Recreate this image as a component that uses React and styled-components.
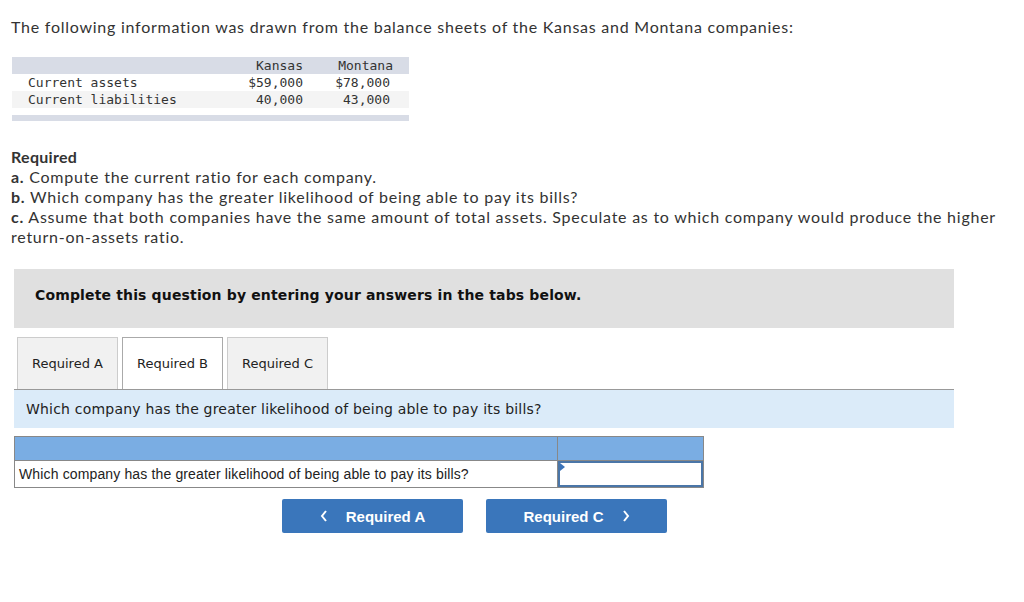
import styled, { createGlobalStyle } from "styled-components";

const GlobalStyle = createGlobalStyle`
  body {
    margin: 0;
    background: #fff;
    color: #333;
  }
`;

function DataTable() {
  const rows = [
    ["Current assets", "$59,000", "$78,000"],
    ["Current liabilities", "40,000", "43,000"],
  ];
  return (
    <DataWrap>
      <DataHead>
        <span></span>
        <span>Kansas</span>
        <span>Montana</span>
      </DataHead>
      {rows.map((r, i) => (
        <DataRow key={i} $shade={i % 2 === 1}>
          <span>{r[0]}</span>
          <span>{r[1]}</span>
          <span>{r[2]}</span>
        </DataRow>
      ))}
      <DataFoot />
    </DataWrap>
  );
}

function Chevron({ dir }) {
  return (
    <svg width="8" height="12" viewBox="0 0 8 12">
      <path
        d={dir === "left" ? "M6 1 L2 6 L6 11" : "M2 1 L6 6 L2 11"}
        fill="none"
        stroke="#fff"
        strokeWidth="2"
      />
    </svg>
  );
}

export default function App() {
  return (
    <Page>
      <GlobalStyle />
      <Intro>
        The following information was drawn from the balance sheets of the Kansas and Montana companies:
      </Intro>
      <DataTable />
      <Required>
        <strong>Required</strong>
        <Line><b>a.</b> Compute the current ratio for each company.</Line>
        <Line><b>b.</b> Which company has the greater likelihood of being able to pay its bills?</Line>
        <Line>
          <b>c.</b> Assume that both companies have the same amount of total assets. Speculate as to which company would produce the higher return-on-assets ratio.
        </Line>
      </Required>
      <Notice>Complete this question by entering your answers in the tabs below.</Notice>
      <Tabs>
        <Tab>Required A</Tab>
        <Tab $active>Required B</Tab>
        <Tab>Required C</Tab>
      </Tabs>
      <Prompt>Which company has the greater likelihood of being able to pay its bills?</Prompt>
      <AnswerTable>
        <AnsHead />
        <AnsHead />
        <AnsLabel>Which company has the greater likelihood of being able to pay its bills?</AnsLabel>
        <AnsInput />
      </AnswerTable>
      <NavRow>
        <NavButton>
          <Chevron dir="left" />
          Required A
        </NavButton>
        <NavButton>
          Required C
          <Chevron dir="right" />
        </NavButton>
      </NavRow>
    </Page>
  );
}

const Page = styled.div`
  padding: 17px 0 0 11px;
  width: 1000px;
`;

const Intro = styled.p`
  margin: 0;
  font-family: Lato, "Open Sans", sans-serif;
  font-size: 16px;
  line-height: 20px;
  letter-spacing: 0.75px;
  color: #333;
`;

const DataWrap = styled.div`
  margin: 20px 0 0 1px;
  width: 397px;
  font-family: "DejaVu Sans Mono", monospace;
  font-size: 13px;
  color: #333;
`;

const DataHead = styled.div`
  display: grid;
  grid-template-columns: 1fr 87px 90px;
  align-items: center;
  height: 17px;
  padding: 0 16px;
  background: #d8dce6;
  span {
    text-align: right;
  }
`;

const DataRow = styled.div`
  display: grid;
  grid-template-columns: 1fr 86px 87px;
  align-items: center;
  height: 17px;
  padding: 0 19px 0 16px;
  background: ${(p) => (p.$shade ? "#f4f4f4" : "#fff")};
  span:nth-child(n + 2) {
    text-align: right;
  }
`;

const DataFoot = styled.div`
  height: 6px;
  margin-top: 7px;
  background: #d8dce6;
`;

const Required = styled.div`
  margin-top: 26px;
  font-family: Lato, "Open Sans", sans-serif;
  font-size: 16px;
  line-height: 20px;
  letter-spacing: 0.75px;
  color: #333;
  strong {
    display: block;
    font-weight: 700;
    letter-spacing: 0.3px;
  }
`;

const Line = styled.div`
  b {
    font-weight: 700;
  }
`;

const Notice = styled.div`
  margin: 22px 0 0 3px;
  width: 940px;
  height: 59px;
  box-sizing: border-box;
  padding: 0 0 8px 21px;
  display: flex;
  align-items: center;
  background: #e0e0e0;
  font-family: "DejaVu Sans", Verdana, sans-serif;
  font-weight: 700;
  font-size: 14px;
  letter-spacing: 0.15px;
  color: #111;
`;

const Tabs = styled.div`
  margin: 9px 0 0 3px;
  width: 940px;
  display: flex;
  gap: 4px;
  padding-left: 3px;
  box-sizing: border-box;
  border-bottom: 1px solid #999;
`;

const Tab = styled.div`
  width: 101px;
  height: 52px;
  box-sizing: border-box;
  display: flex;
  align-items: center;
  justify-content: center;
  font-family: "DejaVu Sans", Verdana, sans-serif;
  font-size: 13px;
  color: #222;
  background: ${(p) => (p.$active ? "#fff" : "#f1f1f1")};
  border: 1px solid ${(p) => (p.$active ? "#aaa" : "#ccc")};
  border-bottom: none;
`;

const Prompt = styled.div`
  margin-left: 3px;
  width: 940px;
  height: 38px;
  box-sizing: border-box;
  padding-left: 12px;
  display: flex;
  align-items: center;
  background: #dbebf9;
  font-family: "DejaVu Sans", Verdana, sans-serif;
  font-size: 14px;
  letter-spacing: 0.2px;
  color: #222;
`;

const AnswerTable = styled.div`
  margin: 8px 0 0 3px;
  width: 690px;
  display: grid;
  grid-template-columns: 543px 145px;
  grid-template-rows: 24px 26px;
  border: 1px solid #888;
  box-sizing: border-box;
`;

const AnsHead = styled.div`
  background: #7aade3;
  border-bottom: 1px solid #888;
  &:first-child {
    border-right: 1px solid #888;
  }
`;

const AnsLabel = styled.div`
  border-right: 1px solid #888;
  padding-left: 4px;
  display: flex;
  align-items: center;
  font-family: "Liberation Sans", Arial, sans-serif;
  font-size: 14px;
  letter-spacing: 0.14px;
  color: #222;
`;

const AnsInput = styled.div`
  position: relative;
  border: 2px solid #4a76a8;
  &::before {
    content: "";
    position: absolute;
    top: 0;
    left: 0;
    border-left: 5px solid #3b73b9;
    border-top: 4px solid transparent;
    border-bottom: 4px solid transparent;
  }
`;

const NavRow = styled.div`
  margin: 11px 0 0 271px;
  display: flex;
  gap: 23px;
`;

const NavButton = styled.div`
  width: 181px;
  height: 34px;
  display: flex;
  align-items: center;
  justify-content: center;
  gap: 18px;
  background: #3a76bb;
  border-radius: 2px;
  font-family: "Liberation Sans", Arial, sans-serif;
  font-weight: 700;
  font-size: 15px;
  color: #fff;
`;
